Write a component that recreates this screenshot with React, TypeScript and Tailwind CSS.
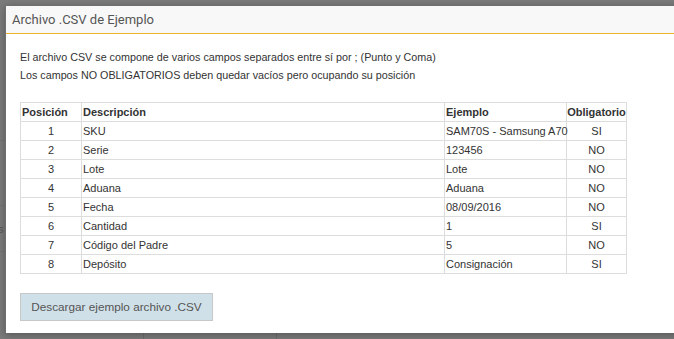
import React from 'react';

const rows = [
  { pos: 1, desc: 'SKU', ej: 'SAM70S - Samsung A70', obl: 'SI' },
  { pos: 2, desc: 'Serie', ej: '123456', obl: 'NO' },
  { pos: 3, desc: 'Lote', ej: 'Lote', obl: 'NO' },
  { pos: 4, desc: 'Aduana', ej: 'Aduana', obl: 'NO' },
  { pos: 5, desc: 'Fecha', ej: '08/09/2016', obl: 'NO' },
  { pos: 6, desc: 'Cantidad', ej: '1', obl: 'SI' },
  { pos: 7, desc: 'Código del Padre', ej: '5', obl: 'NO' },
  { pos: 8, desc: 'Depósito', ej: 'Consignación', obl: 'SI' },
];

export default function App() {
  return (
    <div className="relative w-[674px] h-[339px] overflow-hidden bg-[#7b7b7b] font-['Liberation_Sans',Arial,sans-serif]">
      {/* faded page behind the overlay */}
      <div className="flex flex-col pt-[140px]">
        <div className="h-[65px] border-t border-[#737373]" />
        <div className="h-[46px] border-t border-[#737373] text-[11px] text-[#555] leading-[46px] overflow-hidden">
          <span className="-ml-[8px]">es</span>
        </div>
        <div className="h-[40px] border-t border-[#737373]" />
      </div>
      <div className="absolute left-[143px] bottom-0 h-[6px] border-l border-[#6e6e6e]" />
      <div className="absolute left-[276px] bottom-0 h-[6px] border-l border-[#6e6e6e]" />

      {/* modal */}
      <div className="absolute left-[5px] top-[5px] w-[690px] h-[328px] bg-white border-l border-t border-[#6f6f6f] shadow-[0_2px_8px_rgba(0,0,0,0.3)]">
        <div className="h-[28px] bg-[#f8f8f8] border-b border-[#f0b12a] flex items-center pl-[6px]">
          <h4 className="font-['Roboto',sans-serif] text-[13px] text-[#555] leading-none">Archivo .CSV de Ejemplo</h4>
        </div>
        <div className="pl-[14px] pt-[14px]">
          <p className="text-[10.75px] leading-[18px] text-[#333]">El archivo CSV se compone de varios campos separados entre sí por ; (Punto y Coma)</p>
          <p className="text-[10.75px] leading-[18px] text-[#333]">Los campos NO OBLIGATORIOS deben quedar vacíos pero ocupando su posición</p>

          <table className="mt-[18px] table-fixed w-[606px] border-collapse text-[11px] text-[#333] leading-[18px]">
            <colgroup>
              <col className="w-[61px]" />
              <col className="w-[363px]" />
              <col className="w-[122px]" />
              <col className="w-[60px]" />
            </colgroup>
            <thead>
              <tr>
                <th className="border border-[#ddd] px-px text-left font-bold whitespace-nowrap">Posición</th>
                <th className="border border-[#ddd] px-px text-left font-bold">Descripción</th>
                <th className="border border-[#ddd] px-px text-left font-bold">Ejemplo</th>
                <th className="border border-[#ddd] px-0 text-center font-bold whitespace-nowrap">Obligatorio</th>
              </tr>
            </thead>
            <tbody>
              {rows.map((r) => (
                <tr key={r.pos}>
                  <td className="border border-[#ddd] px-px text-center">{r.pos}</td>
                  <td className="border border-[#ddd] px-px">{r.desc}</td>
                  <td className="border border-[#ddd] px-px whitespace-nowrap">{r.ej}</td>
                  <td className="border border-[#ddd] px-px text-center">{r.obl}</td>
                </tr>
              ))}
            </tbody>
          </table>

          <button className="mt-[19px] h-[28px] w-[193px] bg-[#d0e0e8] border border-[#c8c8c8] text-[11.75px] text-[#555] flex items-center justify-center">
            Descargar ejemplo archivo .CSV
          </button>
        </div>
      </div>
    </div>
  );
}
